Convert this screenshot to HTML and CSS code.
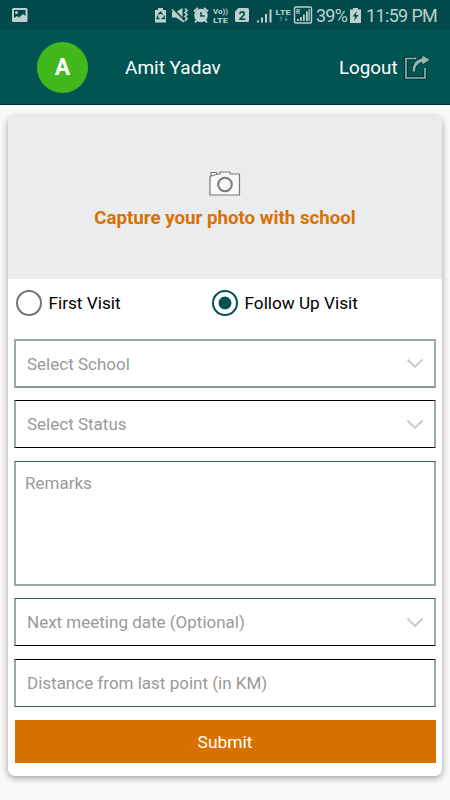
FILE: index.html
```html
<!DOCTYPE html>
<html lang="en">
<head>
<meta charset="utf-8">
<title>School Visit</title>
<link rel="stylesheet" href="styles.css">
</head>
<body>
<div class="status">
  <svg class="s-pic" width="16" height="15" viewBox="0 0 16 15"><path fill-rule="evenodd" d="M1.500 0h12.500a1.500 1.500 0 0 1 1.500 1.500v11a1.500 1.500 0 0 1-1.500 1.500h-12.500a1.500 1.500 0 0 1-1.500-1.500v-11a1.500 1.500 0 0 1 1.500-1.500zM2 2v8l3-2 2 1.500 4-3.500 2.500 2V2zM4.500 3a1.500 1.500 0 1 1 0 3 1.500 1.500 0 0 1 0-3z"/></svg>
  <svg class="s-icons" width="162" height="20" viewBox="154 6 162 20">
    <path d="M158 8h5v2h3v12.500h-11V10h3z"/>
    <g fill="none" stroke="#004b49" stroke-width="1.300"><path d="M158.500 14.500l2-2.500 2 2.500M164 15.500l.5 3h-3M159.500 18.500h-2.500l1-3"/></g>
    <path d="M172 12h4l6.500-4v14l-6.500-4.500h-4z"/>
    <path d="M172.500 8.500l12 13" stroke="#004b49" stroke-width="2.800"/><path d="M172 9.500l12 12.500M185 8.500l2 2-2 2 2 2-2 2 2 2-2 2.500" fill="none" stroke="#bdd0cf" stroke-width="1.700"/>
    <circle cx="201" cy="15.500" r="6.800"/><path d="M194 11.500l4-3.500M208 11.500l-4-3.500M197 20l-2 2.500M205 20l2 2.500" stroke="#bdd0cf" stroke-width="2"/><path d="M201 12v4h3.500" fill="none" stroke="#004b49" stroke-width="1.500"/>
    <text x="213" y="13.500" class="tiny" textLength="15" lengthAdjust="spacingAndGlyphs">Vo))</text><text x="213" y="22.500" class="tiny" textLength="15" lengthAdjust="spacingAndGlyphs">LTE</text>
    <path d="M238.500 8h9q1.500 0 1.500 1.500v11q0 1.500-1.500 1.500h-11q-1.500 0-1.500-1.500V11.500z"/><text x="238.500" y="19.500" class="sim">2</text>
    <path d="M257 20.500h2v2h-2zM261 17.500h2v5h-2zM265 14h2v8.500h-2zM269.500 9.500h2v13h-2z"/>
    <text x="275.500" y="14.500" class="tiny" textLength="15.500" lengthAdjust="spacingAndGlyphs">LTE</text><path d="M281 18.500h-2l2-2 2 2h-1.500v3h-1zM286 19h-2l2 2.500 2-2.500h-1.500v-3h-1z" opacity=".5"/>
    <path d="M296 7h14q1.500 0 1.500 1.500v13q0 1.500-1.500 1.500h-14q-1.500 0-1.500-1.500v-13q0-1.500 1.500-1.500z" fill="none" stroke="#bdd0cf" stroke-width="1.400"/><text x="296" y="14" class="micro">R</text>
    <path d="M297 19h1.800v2H297zM300 17h1.800v4H300zM303 14.500h1.800V21H303zM306 11.500h1.800V21H306zM308.500 9h1.200v12h-1.200z"/>
  </svg>
  <span class="pct">39%</span>
  <svg class="s-bat" width="11" height="15" viewBox="0 0 11 15"><path d="M3 0h5v1.500h3V15H0V1.500h3z"/><path d="M7 3L2.500 8.500h2.700L4 13l4.500-6H5.800L7 3z" fill="#004b49"/></svg>
  <span class="clock">11:59 PM</span>
</div>
<header class="bar">
  <div class="avatar">A</div>
  <div class="name">Amit Yadav</div>
  <div class="logout">Logout</div>
  <svg class="exit" width="27" height="26" viewBox="0 0 27 26"><path d="M11 4.500H2V24h19V15" fill="none" stroke="#02302e" stroke-width="3.500"/><path d="M12 4.500H2V24h19V14" fill="none" stroke="#91b7b5" stroke-width="1.600"/><path d="M8 18Q7.500 7 18 3.800V.8l8.500 5-8.500 5.400V8.500Q11 10 11.500 18z" fill="#91b7b5" stroke="#02302e" stroke-width=".9"/></svg>
</header>
<main class="card">
  <div class="photo">
    <svg class="camera" width="32" height="25" viewBox="0 0 32 25"><path d="M1 5.500L9 3h2V1h10v2h9.500v21H1zM2 5V1.500h5.500V3.500" fill="#f7f8f9" stroke="#77797b" stroke-width="1.200" stroke-linejoin="round"/><circle cx="16" cy="13.500" r="6.800" fill="#f7f8f9" stroke="#77797b" stroke-width="2"/></svg>
    <div class="capture">Capture your photo with school</div>
  </div>
  <div class="radios">
    <div class="radio"><i class="dot"></i><span class="r1">First Visit</span></div>
    <div class="radio"><i class="dot on"></i><span class="r2">Follow Up Visit</span></div>
  </div>
  <div class="field f1"><span>Select School</span><svg class="chev" width="18" height="11" viewBox="0 0 18 11"><path d="M1.500 1.500L9 9l7.500-7.500"/></svg></div>
  <div class="field f2"><span>Select Status</span><svg class="chev" width="18" height="11" viewBox="0 0 18 11"><path d="M1.500 1.500L9 9l7.500-7.500"/></svg></div>
  <div class="field f3"><span>Remarks</span></div>
  <div class="field f4"><span>Next meeting date (Optional)</span><svg class="chev" width="18" height="11" viewBox="0 0 18 11"><path d="M1.500 1.500L9 9l7.500-7.500"/></svg></div>
  <div class="field f5"><span>Distance from last point (in KM)</span></div>
  <div class="submit">Submit</div>
</main>
</body>
</html>
```
FILE: styles.css
```css
* { box-sizing: border-box; }
body { margin: 0; width: 450px; height: 800px; overflow: hidden; background: #fafafa; font-family: Roboto, "Liberation Sans", sans-serif; font-size: 17px; color: #000; white-space: nowrap; }
svg { display: block; flex: none; }
.status { height: 30px; background: #004b49; display: flex; align-items: flex-start; color: #bdd0cf; fill: #bdd0cf; }
.s-pic { margin: 8px 0 0 12px; }
.s-icons { margin: 6px 0 0 126px; }
.tiny { font-size: 7.500px; font-weight: 700; }
.sim { font-size: 12.500px; font-weight: 700; fill: #004b49; }
.micro { font-size: 6.500px; font-weight: 700; }
.pct { width: 30px; margin-top: 5px; line-height: 21px; font-size: 18px; letter-spacing: -.8px; }
.s-bat { margin: 8px 0 0 4px; }
.clock { margin: 5px 0 0 5px; line-height: 21px; font-size: 18px; letter-spacing: -.65px; }
.bar { height: 75px; background: #005553; border-bottom: 1px solid #00302f; display: flex; align-items: center; color: #fff; font-size: 19px; }
.avatar { width: 51px; height: 51px; margin: 1px 0 0 37px; border-radius: 50%; background: #43b81c; font-size: 23px; font-weight: 700; line-height: 52px; text-align: center; }
.name, .logout { padding-top: 1px; }
.name { margin-left: 37px; width: 214px; }
.logout { width: 65px; font-size: 18.800px; }
.exit { margin-top: -1px; }
.card { width: 434px; height: 660px; margin: 11px 8px 0; border-radius: 7px; background: #fff; box-shadow: 0 2px 7px rgba(0,0,0,.38); overflow: hidden; }
.photo { height: 163px; background: #ebecee; display: flex; flex-direction: column; align-items: center; padding-top: 55px; }
.camera { margin-right: 1px; }
.capture { margin-top: 10px; line-height: 24px; font-size: 18.700px; font-weight: 700; color: #d97100; }
.radios { height: 60px; display: grid; grid-template-columns: 196px 1fr; padding: 11px 0 0 7.500px; font-size: 17.200px; }
.radio { display: flex; height: 26px; margin-top: -.5px; align-items: center; gap: 7px; }
.dot { width: 26px; height: 26px; border: 2.500px solid #737373; border-radius: 50%; }
.dot.on { border-color: #005350; background: radial-gradient(circle, #005350 6px, #fff 6.800px); }
.field { margin: 0 6px; height: 48px; border: 1px solid #000; border-left: 2px solid #97a9a9; border-right: 2px solid #97a9a9; padding: 0 10px 0 11px; display: flex; align-items: center; justify-content: space-between; color: #999; font-size: 17px; }
.chev { fill: none; stroke: #c8c8c8; stroke-width: 1.800; }
.f1 { height: 49px; border-top: 2px solid #97a9a9; border-bottom: 2px solid #819896; margin-bottom: 12px; }
.f3 { margin-top: 13px; height: 125px; align-items: flex-start; padding: 11px 9px; border-top-color: #2f5c5a; border-bottom: 2px solid #97a9a9; }
.f4 { margin-top: 12px; border-top-color: #2f5c5a; }
.f5 { margin-top: 13px; border-bottom-color: #2f5c5a; }
.submit { margin: 12.500px 6.500px 0; height: 43.500px; background: #d97100; color: #fff; text-align: center; line-height: 44px; font-size: 17.400px; }
```
